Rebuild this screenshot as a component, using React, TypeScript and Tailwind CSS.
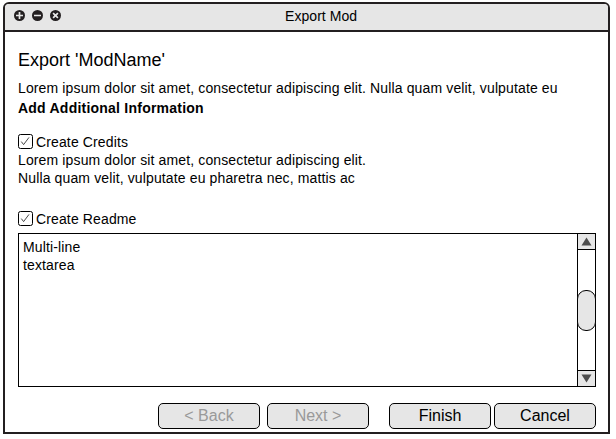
import React from "react";

function Check({ label }: { label: string }) {
  return (
    <label className="flex h-[18px] items-start gap-[3px]">
      <svg className="mt-px shrink-0" width="15" height="15" viewBox="0 0 15 15" fill="none">
        <rect x="0.5" y="0.5" width="14" height="14" rx="2" stroke="#000" />
        <path d="M3.3 7.6 L5.6 10.6 L11 3.4" stroke="#333" strokeWidth="0.9" />
      </svg>
      <span>{label}</span>
    </label>
  );
}

function WindowIcon({ d }: { d: string }) {
  return (
    <svg width="11" height="11" viewBox="0 0 11 11" fill="none">
      <circle cx="5.5" cy="5.5" r="5.5" fill="#231f20" />
      <path d={d} stroke="#e6e6e6" strokeWidth="1.7" />
    </svg>
  );
}

function Button({ children, disabled = false, className = "" }: { children: React.ReactNode; disabled?: boolean; className?: string }) {
  return (
    <button
      disabled={disabled}
      className={`h-[26px] w-[102px] shrink-0 rounded-[5px] border border-black bg-[#e6e6e6] text-base leading-6 tracking-normal ${disabled ? "text-[#999]" : "text-black"} ${className}`}
    >
      {children}
    </button>
  );
}

export default function App() {
  return (
    <div className="h-[439px] w-[616px] overflow-hidden bg-white pl-[3px] pt-[2px] font-['Liberation_Sans',Arial,sans-serif] text-sm leading-[18px] whitespace-nowrap text-black">
      <div className="flex h-[432px] w-[607px] flex-col overflow-hidden rounded-t-[6px] border-2 border-[#231f20]">
        <header className="flex h-[28px] shrink-0 items-start border-b-2 border-[#231f20] bg-[#e6e6e6] pl-[9px] leading-[25px]">
          <div className="flex w-[47px] shrink-0 gap-[7px] pt-[6px]">
            <WindowIcon d="M5.5 2V9M2 5.5H9" />
            <WindowIcon d="M2 5.5H9" />
            <WindowIcon d="M3.1 3.1L7.9 7.9M7.9 3.1L3.1 7.9" />
          </div>
          <span className="ml-[224px] tracking-[0.06px]">Export Mod</span>
        </header>
        <main className="flex flex-col px-[13px] pt-[17px] tracking-[0.13px]">
          <h1 className="text-lg leading-[22px] tracking-normal">Export 'ModName'</h1>
          <p className="mt-2">Lorem ipsum dolor sit amet, consectetur adipiscing elit. Nulla quam velit, vulputate eu</p>
          <p className="mt-[2px] font-bold tracking-[0.23px]">Add Additional Information</p>
          <div className="mt-4">
            <Check label="Create Credits" />
            <p>Lorem ipsum dolor sit amet, consectetur adipiscing elit.</p>
            <p>Nulla quam velit, vulputate eu pharetra nec, mattis ac</p>
          </div>
          <div className="mt-[23px]">
            <Check label="Create Readme" />
          </div>
          <div className="mt-[5px] flex h-[154px] w-[578px] border border-black">
            <div className="flex-1 px-1 pt-1">
              Multi-line
              <br />
              textarea
            </div>
            <div className="flex w-[18px] flex-col border-l border-black">
              <div className="flex h-4 items-center justify-center border-b border-black bg-[#e6e6e6]">
                <svg width="11" height="9" viewBox="0 0 11 9"><path d="M5.5 0.5L10.5 8.5H0.5Z" fill="#4d4d4d" /></svg>
              </div>
              <div className="flex-1 pt-10">
                <div className="-mr-px -ml-px h-[41px] rounded-[9px] border border-black bg-[#e6e6e6]" />
              </div>
              <div className="flex h-4 items-center justify-center border-t border-black bg-[#e6e6e6]">
                <svg width="11" height="9" viewBox="0 0 11 9"><path d="M5.5 8.5L10.5 0.5H0.5Z" fill="#4d4d4d" /></svg>
              </div>
            </div>
          </div>
          <footer className="mt-4 flex pl-[140px]">
            <Button disabled>&lt; Back</Button>
            <Button disabled className="ml-[7px]">Next &gt;</Button>
            <Button className="ml-5">Finish</Button>
            <Button className="ml-[3px]">Cancel</Button>
          </footer>
        </main>
      </div>
    </div>
  );
}
